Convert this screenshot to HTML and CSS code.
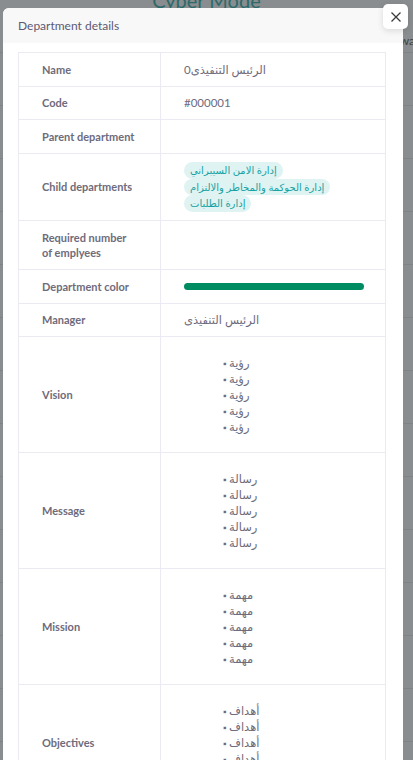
FILE: index.html
```html
<!DOCTYPE html>
<html lang="en">
<head>
<meta charset="utf-8">
<title>Department details</title>
<link rel="stylesheet" href="styles.css">
</head>
<body>
<div class="page">
  <div class="page-title">Cyber Mode</div>
  <div class="page-side">wa</div>
</div>
<div class="modal">
  <div class="modal-header">
    <h5 class="modal-title">Department details</h5>
  </div>
  <button class="close-btn" aria-label="Close">
    <svg width="12" height="12" viewBox="0 0 12 12"><path d="M1.5 1.5 L10.5 10.5 M10.5 1.5 L1.5 10.5" stroke="#3b3b3b" stroke-width="1.3" fill="none"/></svg>
  </button>
  <div class="modal-body">
    <table class="details">
      <colgroup><col class="col-label"><col></colgroup>
      <tr><th>Name</th><td>الرئيس التنفيذى0</td></tr>
      <tr><th>Code</th><td>#000001</td></tr>
      <tr><th>Parent department</th><td></td></tr>
      <tr><th>Child departments</th><td>
        <div class="badges">
          <span class="badge">إدارة الامن السيبراني</span>
          <span class="badge">إدارة الحوكمة والمخاطر والالتزام</span>
          <span class="badge">إدارة الطلبات</span>
        </div>
      </td></tr>
      <tr><th>Required number<br>of emplyees</th><td></td></tr>
      <tr><th>Department color</th><td><div class="color-bar"></div></td></tr>
      <tr><th>Manager</th><td>الرئيس التنفيذى</td></tr>
      <tr><th>Vision</th><td><ul class="list"><li>رؤية</li><li>رؤية</li><li>رؤية</li><li>رؤية</li><li>رؤية</li></ul></td></tr>
      <tr><th>Message</th><td><ul class="list"><li>رسالة</li><li>رسالة</li><li>رسالة</li><li>رسالة</li><li>رسالة</li></ul></td></tr>
      <tr><th>Mission</th><td><ul class="list"><li>مهمة</li><li>مهمة</li><li>مهمة</li><li>مهمة</li><li>مهمة</li></ul></td></tr>
      <tr><th>Objectives</th><td><ul class="list"><li>أهداف</li><li>أهداف</li><li>أهداف</li><li>أهداف</li><li>أهداف</li></ul></td></tr>
    </table>
  </div>
</div>
</body>
</html>
```

FILE: styles.css
```css
html, body {
  margin: 0;
  padding: 0;
  height: 100%;
  overflow: hidden;
}
body {
  background: #898d8f;
  font-family: "Lato", "DejaVu Sans", sans-serif;
}
.page {
  height: 760px;
  position: relative;
  background:
    repeating-linear-gradient(to bottom, transparent 0, transparent 52px, #7f8384 52px, #7f8384 53px);
}
.page-title {
  position: absolute;
  top: -12px;
  left: 0;
  right: 0;
  text-align: center;
  font-size: 20px;
  font-weight: 400;
  color: #2c6a6a;
}
.page-side {
  position: absolute;
  top: 33px;
  right: -2px;
  font-size: 12px;
  color: #3e4244;
}
.modal {
  position: absolute;
  left: 3px;
  top: 8px;
  width: 400px;
  bottom: -40px;
  background: #fff;
  border-radius: 6px 6px 0 0;
  overflow: hidden;
}
.modal-header {
  height: 35px;
  background: #f8f8f8;
  display: flex;
  align-items: center;
  padding: 0 15px;
}
.modal-title {
  margin: 0;
  font-size: 12px;
  font-weight: 400;
  color: #5e5873;
}
.close-btn {
  position: fixed;
  left: 383px;
  top: 4px;
  width: 25px;
  height: 25px;
  border: 0;
  border-radius: 5px;
  background: #fff;
  box-shadow: 0 2px 6px rgba(0,0,0,0.12);
  display: flex;
  align-items: center;
  justify-content: center;
  padding: 0;
}
.modal-body {
  padding: 9px 17px 0 15px;
}
.details {
  width: 100%;
  table-layout: fixed;
  border-collapse: collapse;
  font-size: 11.5px;
  line-height: 15.5px;
}
.col-label {
  width: 142px;
}
.details th, .details td {
  border: 1px solid #ebe9f1;
  padding: 8.5px 23px;
  vertical-align: middle;
  text-align: left;
}
.details th {
  font-weight: 700;
  font-size: 11px;
  color: #6e6b7b;
}
.details td {
  color: #6e6b7b;
  font-weight: 400;
}
.badges {
  display: flex;
  flex-direction: column;
  align-items: flex-start;
}
.badge {
  display: block;
  background: #dff3f3;
  color: #16a2a2;
  font-size: 10px;
  line-height: 16.5px;
  height: 16.5px;
  padding: 0 6px;
  border-radius: 9px;
}
.color-bar {
  width: 180px;
  height: 7px;
  border-radius: 4px;
  background: #008c62;
}
.list {
  margin: 9px 0;
  padding-left: 45px;
  line-height: 16px;
  font-size: 11.5px;
}
.list li::marker {
  content: "▪ ";
  font-size: 9px;
}
```
